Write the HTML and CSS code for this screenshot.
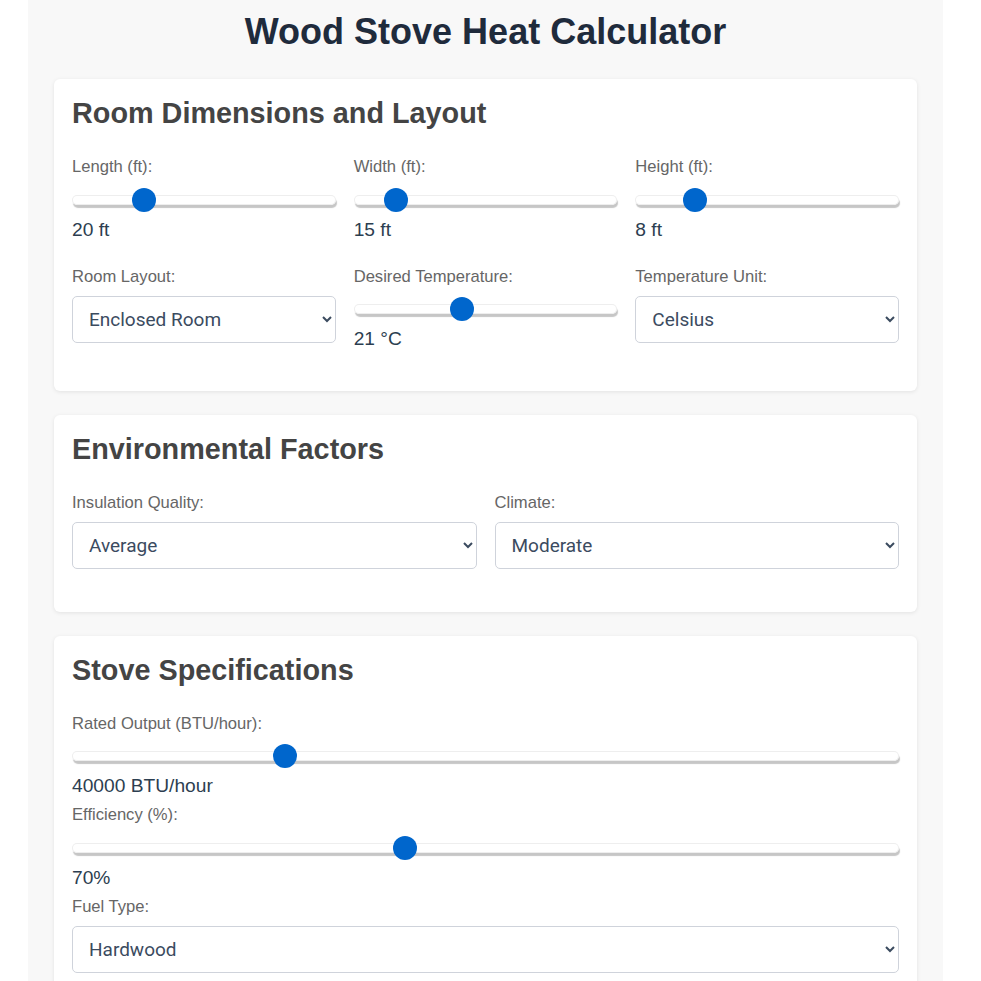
FILE: index.html
```html
<!DOCTYPE html>
<html lang="en">
<head>
<meta charset="utf-8">
<title>Wood Stove Heat Calculator</title>
<link rel="stylesheet" href="styles.css">
</head>
<body>
<div class="container">
  <h1 class="title">Wood Stove Heat Calculator</h1>

  <section class="card">
    <h2 class="card-title">Room Dimensions and Layout</h2>
    <div class="grid grid-3">
      <div class="form-group">
        <label class="label" for="length">Length (ft):</label>
        <input class="range" type="range" id="length" min="10" max="50" value="20">
        <div class="value">20 ft</div>
      </div>
      <div class="form-group">
        <label class="label" for="width">Width (ft):</label>
        <input class="range" type="range" id="width" min="10" max="50" value="15">
        <div class="value">15 ft</div>
      </div>
      <div class="form-group">
        <label class="label" for="height">Height (ft):</label>
        <input class="range" type="range" id="height" min="6" max="16" value="8">
        <div class="value">8 ft</div>
      </div>
      <div class="form-group">
        <label class="label" for="layout">Room Layout:</label>
        <select class="select" id="layout">
          <option>Enclosed Room</option>
          <option>Open Plan</option>
        </select>
      </div>
      <div class="form-group">
        <label class="label" for="temp">Desired Temperature:</label>
        <input class="range" type="range" id="temp" min="15" max="30" value="21">
        <div class="value">21 °C</div>
      </div>
      <div class="form-group">
        <label class="label" for="unit">Temperature Unit:</label>
        <select class="select" id="unit">
          <option>Celsius</option>
          <option>Fahrenheit</option>
        </select>
      </div>
    </div>
  </section>

  <section class="card">
    <h2 class="card-title">Environmental Factors</h2>
    <div class="grid grid-2">
      <div class="form-group">
        <label class="label" for="insulation">Insulation Quality:</label>
        <select class="select" id="insulation">
          <option>Average</option>
          <option>Poor</option>
          <option>Good</option>
        </select>
      </div>
      <div class="form-group">
        <label class="label" for="climate">Climate:</label>
        <select class="select" id="climate">
          <option>Moderate</option>
          <option>Cold</option>
          <option>Mild</option>
        </select>
      </div>
    </div>
  </section>

  <section class="card">
    <h2 class="card-title">Stove Specifications</h2>
    <div class="stack">
      <div class="form-group">
        <label class="label" for="output">Rated Output (BTU/hour):</label>
        <input class="range" type="range" id="output" min="20000" max="100000" value="40000">
        <div class="value">40000 BTU/hour</div>
      </div>
      <div class="form-group">
        <label class="label" for="efficiency">Efficiency (%):</label>
        <input class="range" type="range" id="efficiency" min="50" max="100" value="70">
        <div class="value">70%</div>
      </div>
      <div class="form-group">
        <label class="label" for="fuel">Fuel Type:</label>
        <select class="select" id="fuel">
          <option>Hardwood</option>
          <option>Softwood</option>
        </select>
      </div>
    </div>
  </section>
</div>
</body>
</html>
```

FILE: styles.css
```css
html, body {
  margin: 0;
  background: #ffffff;
}

body {
  padding: 0 38px 0 28px;
  font-family: "Liberation Sans", Arial, sans-serif;
  font-size: 16px;
  color: #333;
}

.container {
  background: #f8f8f8;
  padding: 11px 26px 20px;
}

.title {
  margin: 0 0 26px;
  text-align: center;
  font-size: 36px;
  font-weight: bold;
  line-height: normal;
  color: #1f2b3c;
}

.card {
  background: #ffffff;
  border-radius: 6px;
  box-shadow: 0 1px 4px rgba(0, 0, 0, 0.09);
  padding: 18px 18px 33px;
  margin-bottom: 24px;
}

.card-title {
  margin: 0 0 27px;
  font-size: 28.8px;
  font-weight: bold;
  line-height: normal;
  color: #444444;
}

.grid {
  display: grid;
  column-gap: 18px;
  row-gap: 18px;
}

.grid-3 {
  grid-template-columns: repeat(3, 1fr);
}

.grid-2 {
  grid-template-columns: repeat(2, 1fr);
}

.stack {
  display: flex;
  flex-direction: column;
}

.form-group {
  margin-bottom: 8px;
  min-width: 0;
}

.label {
  display: block;
  margin-bottom: 9px;
  font-size: 16.6px;
  line-height: normal;
  color: #666666;
}

.value {
  font-size: 19.2px;
  line-height: normal;
  color: #2c3e50;
}

.range {
  -webkit-appearance: none;
  appearance: none;
  display: block;
  width: 100%;
  height: 10px;
  margin: 17.5px 0 14px;
  padding: 0;
  background: transparent;
  overflow: visible;
}

.range::-webkit-slider-runnable-track {
  height: 10px;
  background: #ffffff;
  border-radius: 5px;
  box-shadow: 1px 3px 1px #c6c6c6, inset 0 0 0 1px #eeeeee;
}

.range::-webkit-slider-thumb {
  -webkit-appearance: none;
  appearance: none;
  width: 24px;
  height: 24px;
  border-radius: 50%;
  background: #0066cc;
  border: none;
  margin-top: -7px;
}

.select {
  display: block;
  box-sizing: border-box;
  width: 100%;
  height: 47px;
  margin: 0 0 1.5px;
  padding: 0 12px 0 12px;
  border: 1px solid #cfd3db;
  border-radius: 5px;
  background: #ffffff;
  font-family: Roboto, "Liberation Sans", sans-serif;
  font-size: 19px;
  color: #3b4b5f;
}
```
